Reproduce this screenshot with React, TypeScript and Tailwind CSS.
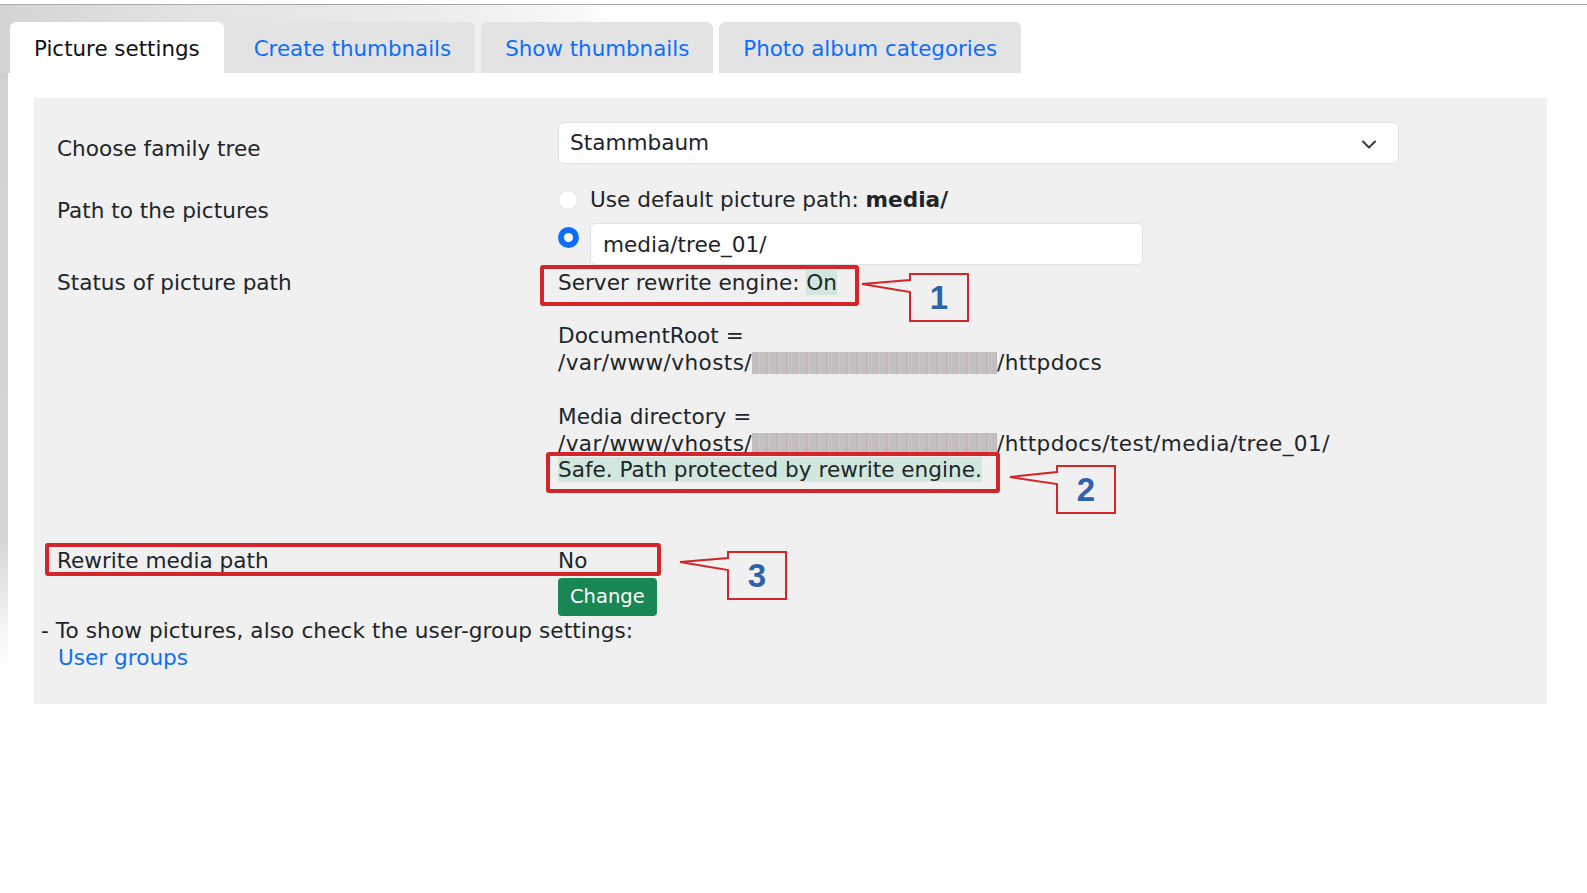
import React from "react";

const tabs = ["Picture settings", "Create thumbnails", "Show thumbnails", "Photo album categories"];

const Blurred = ({ w }: { w: number }) => (
  <span
    className="inline-block h-[22px] align-[-4px] blur-[0.5px] opacity-85 bg-[repeating-linear-gradient(90deg,#c4aec2_0px,#a9bfa6_2px,#c6b8dc_3px,#b3a996_5px,#d8bfd0_7px,#9fb7bb_8px,#cfc3a8_10px)]"
    style={{ width: w }}
  />
);

const Callout = ({ tipX, tipY, boxX, boxY, n }: { tipX: number; tipY: number; boxX: number; boxY: number; n: string }) => {
  const w = 58;
  const h = 47;
  const x0 = boxX - tipX + 2;
  const path = `M2 ${tipY - boxY + 2} L${x0} ${8} L${x0} 2 L${x0 + w} 2 L${x0 + w} ${h + 2} L${x0} ${h + 2} L${x0} ${20} Z`;
  return (
    <>
      <svg
        className="absolute"
        style={{ left: tipX - 2, top: boxY - 2 }}
        width={boxX + w - tipX + 4}
        height={h + 4}
      >
        <path d={path} fill="#f0f0f0" stroke="#d3252a" strokeWidth="2" strokeLinejoin="miter" />
      </svg>
      <div
        className="absolute flex items-center justify-center font-['Liberation_Sans',sans-serif] text-[33px] font-bold text-[#2f62ab]"
        style={{ left: boxX, top: boxY, width: w, height: h }}
      >
        {n}
      </div>
    </>
  );
};

export default function App() {
  return (
    <div className="relative min-h-[893px] w-full overflow-hidden bg-white bg-[linear-gradient(180deg,#d0d0d0_0px,#d6d6d6_540px,#f6f6f6_630px,#ffffff_680px)] font-['DejaVu_Sans',sans-serif] text-[21.6px] text-[#212529]">
      <div className="h-[4px] bg-white" />
      {/* tabs */}
      <div className="flex gap-[6px] border-t border-[#a8abae] bg-[linear-gradient(90deg,#d4d4d4_0px,#e2e2e2_180px,#ebebeb_420px,#f8f8f8_580px,#ffffff_610px)] pl-[10px] pt-[17px] text-[21.4px]">
        {tabs.map((t, i) => (
          <div
            key={t}
            className={
              "flex h-[51px] items-center rounded-t-[6px] px-[24px] pt-[3px] " +
              (i === 0 ? "bg-white text-[#111]" : "bg-[#e3e3e3] text-[#0d6efd]")
            }
          >
            {t}
          </div>
        ))}
      </div>

      <div className="ml-[8px] bg-white pl-[26px] pr-[40px] pt-[25px] pb-[188px]">
        <div className="bg-[#f0f0f0] pt-[24px] pb-[32px] leading-[26.8px]">
          {/* family tree */}
          <div className="ml-[23px] grid grid-cols-[501px_841px]">
            <div className="pt-[14px]">Choose family tree</div>
            <div className="flex h-[42px] items-center justify-between rounded-[6px] border border-[#dee2e6] bg-white pl-[11px] pr-[21px] pt-[1px]">
              <span>Stammbaum</span>
              <svg width="16" height="12" viewBox="0 0 16 12">
                <path d="M2 3.5l6 6 6-6" fill="none" stroke="#343a40" strokeWidth="2" strokeLinecap="round" strokeLinejoin="round" />
              </svg>
            </div>
          </div>

          {/* path */}
          <div className="ml-[23px] mt-[22px] grid grid-cols-[501px_841px]">
            <div className="pt-[12px]">Path to the pictures</div>
            <div>
              <div className="flex items-center gap-[12px] pt-[1px]">
                <span className="h-[20px] w-[20px] rounded-full border border-[#dee2e6] bg-white" />
                <span>
                  Use default picture path: <b>media/</b>
                </span>
              </div>
              <div className="mt-[9px] flex items-start gap-[11px]">
                <span className="mt-[4px] flex h-[21px] w-[21px] items-center justify-center rounded-full bg-[#0d6efd]">
                  <span className="h-[9px] w-[9px] rounded-full bg-white" />
                </span>
                <div className="flex h-[42px] w-[553px] items-center rounded-[6px] border border-[#dee2e6] bg-white px-[12px] pt-[3px]">
                  media/tree_01/
                </div>
              </div>
            </div>
          </div>

          {/* status */}
          <div className="ml-[23px] mt-[5px] grid grid-cols-[501px_841px]">
            <div>Status of picture path</div>
            <div>
              <div>
                Server rewrite engine: <span className="bg-[#d1e7dd]">On</span>
              </div>
              <br />
              <div>DocumentRoot =</div>
              <div className="tracking-[0.4px]">
                /var/www/vhosts/
                <Blurred w={245} />
                /httpdocs
              </div>
              <br />
              <div>Media directory =</div>
              <div className="tracking-[0.4px]">
                /var/www/vhosts/
                <Blurred w={245} />
                /httpdocs/test/media/tree_01/
              </div>
              <div>
                <span className="bg-[#d1e7dd]">Safe. Path protected by rewrite engine.</span>
              </div>
            </div>
          </div>

          {/* rewrite media path */}
          <div className="ml-[23px] mt-[64px] grid grid-cols-[501px_841px]">
            <div>Rewrite media path</div>
            <div>
              <div>No</div>
              <button className="mt-[3px] h-[38px] rounded-[4px] bg-[#198754] px-[12px] pt-[1px] text-[19.5px] text-white">
                Change
              </button>
            </div>
          </div>

          <div className="ml-[7px] mt-[2px]">
            <span className="tracking-[0.1px]">- To show pictures, also check the user-group settings:</span>
            <div className="pl-[17px]">
              <a className="text-[#0d6efd]">User groups</a>
            </div>
          </div>
        </div>
      </div>

      {/* annotations */}
      <div className="absolute left-[540px] top-[265px] h-[41px] w-[319px] rounded-[3px] border-[4px] border-[#d3252a]" />
      <div className="absolute left-[546px] top-[452px] h-[41px] w-[454px] rounded-[3px] border-[4px] border-[#d3252a]" />
      <div className="absolute left-[45px] top-[543px] h-[33px] w-[616px] rounded-[3px] border-[4px] border-[#d3252a]" />
      <Callout tipX={862} tipY={284} boxX={910} boxY={274} n="1" />
      <Callout tipX={1010} tipY={477} boxX={1057} boxY={466} n="2" />
      <Callout tipX={680} tipY={562} boxX={728} boxY={552} n="3" />
    </div>
  );
}
